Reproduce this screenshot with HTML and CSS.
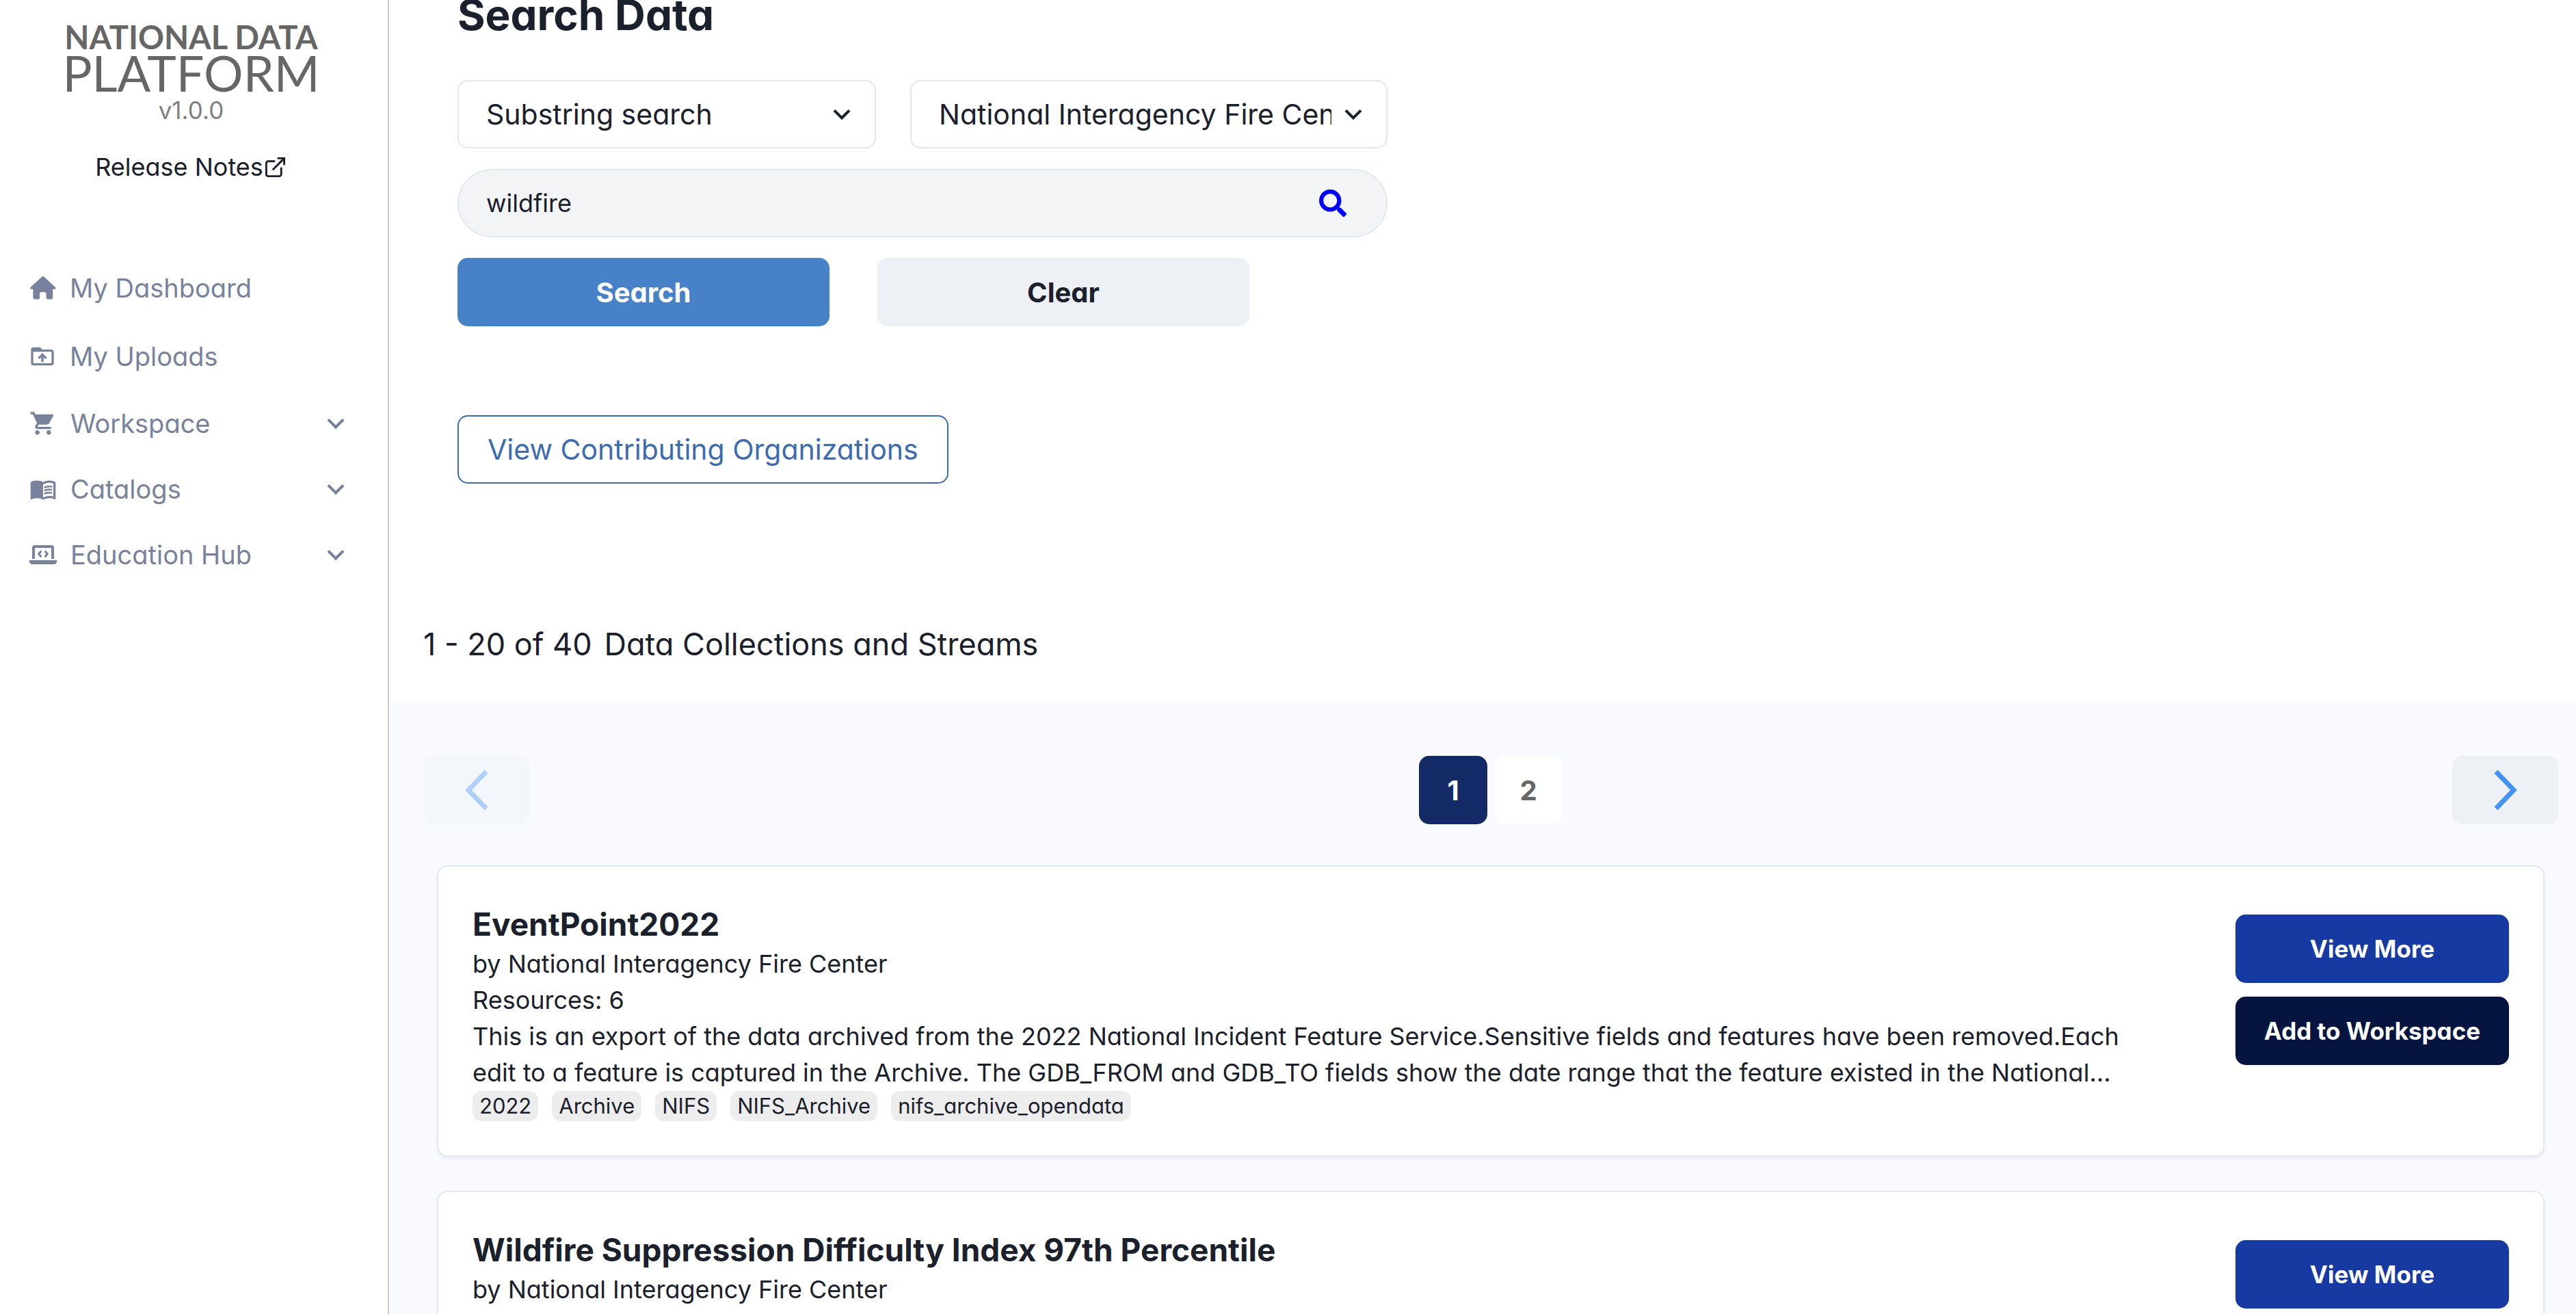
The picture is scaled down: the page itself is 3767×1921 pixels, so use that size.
FILE: index.html
```html
<!DOCTYPE html>
<html lang="en">
<head>
<meta charset="utf-8">
<title>Search Data - National Data Platform</title>
<link rel="stylesheet" href="styles.css">
</head>
<body>
<aside class="sidebar">
  <div class="brand">
    <span class="brand-top">NATIONAL DATA</span>
    <span class="brand-bottom">PLATFORM</span>
  </div>
  <p class="version">v1.0.0</p>
  <a class="release" href="#">Release Notes<svg class="icon-link" viewBox="0 0 24 24" fill="none" stroke="currentColor" stroke-width="2" stroke-linecap="round"><path d="M15 3h6v6"/><path d="M10 14L20.500 3.500"/><path d="M18 13v6a2 2 0 0 1-2 2H5a2 2 0 0 1-2-2V8a2 2 0 0 1 2-2h6"/></svg></a>
  <nav class="nav">
    <a class="nav-item nav-page" href="#"><svg class="icon" viewBox="0 0 20 20"><path d="M11.100 1.800a1 1 0 0 0-1.400 0L1.300 9.500a.800.800 0 0 0 .500 1.400H3.200v6.200a1.200 1.200 0 0 0 1.200 1.200h2.400A1.200 1.200 0 0 0 8 17.100v-2.900a1.200 1.200 0 0 1 1.200-1.200h2.400a1.200 1.200 0 0 1 1.200 1.200v2.900a1.200 1.200 0 0 0 1.200 1.200h2.400a1.200 1.200 0 0 0 1.200-1.200v-6.200H19a.800.800 0 0 0 .500-1.400z"/></svg><span>My Dashboard</span></a>
    <a class="nav-item nav-page" href="#"><svg class="icon" viewBox="0 0 24 24"><path d="M20 6h-8l-2-2H4c-1.100 0-1.990.900-1.990 2L2 18c0 1.100.900 2 2 2h16c1.100 0 2-.900 2-2V8c0-1.100-.900-2-2-2zm0 12H4V8h16v10zM8 13.010l1.410 1.410L11 12.840V17h2v-4.160l1.590 1.590L16 13.010 12.010 9 8 13.010z"/></svg><span>My Uploads</span></a>
    <button class="nav-item nav-group" type="button"><svg class="icon" viewBox="0 0 24 24"><path d="M7 18c-1.100 0-1.990.900-1.990 2S5.900 22 7 22s2-.900 2-2-.900-2-2-2zM1 2v2h2l3.600 7.590-1.350 2.450c-.160.280-.250.610-.250.960 0 1.100.900 2 2 2h12v-2H7.420c-.140 0-.250-.110-.250-.250l.030-.120.900-1.630h7.450c.750 0 1.410-.410 1.750-1.030l3.580-6.490c.080-.140.120-.310.120-.480 0-.550-.450-1-1-1H5.210l-.940-2H1zm16 16c-1.100 0-1.990.900-1.990 2s.890 2 1.990 2 2-.900 2-2-.900-2-2-2z"/></svg><span>Workspace</span><svg class="chevron" viewBox="0 0 24 24"><path d="M16.590 8.590L12 13.170 7.410 8.590 6 10l6 6 6-6z"/></svg></button>
    <button class="nav-item nav-group" type="button"><svg class="icon" viewBox="0 0 24 24"><path d="M21 5c-1.110-.350-2.330-.500-3.500-.500-1.950 0-4.050.400-5.500 1.500-1.450-1.100-3.550-1.500-5.500-1.500S2.450 4.900 1 6v14.650c0 .250.250.500.500.500.100 0 .150-.050.250-.050C3.100 20.450 5.050 20 6.500 20c1.950 0 4.050.400 5.500 1.500 1.350-.850 3.800-1.500 5.500-1.500 1.650 0 3.350.300 4.750 1.050.100.050.150.050.250.050.250 0 .500-.250.500-.500V6c-.600-.450-1.250-.750-2-1zm0 13.500c-1.100-.350-2.300-.500-3.500-.500-1.700 0-4.150.650-5.500 1.500V8c1.350-.850 3.800-1.500 5.500-1.500 1.200 0 2.400.150 3.500.500v11.500z"/><path d="M17.500 10.500c.880 0 1.730.090 2.500.260V9.240c-.790-.150-1.640-.240-2.500-.240-1.700 0-3.240.290-4.500.830v1.660c1.130-.640 2.700-.990 4.500-.990zM13 12.490v1.660c1.130-.640 2.700-.990 4.500-.990.880 0 1.730.090 2.500.260V11.900c-.790-.150-1.640-.240-2.500-.240-1.700 0-3.240.300-4.500.830zM17.500 14.330c-1.700 0-3.240.290-4.500.830v1.660c1.130-.640 2.700-.990 4.500-.990.880 0 1.730.090 2.500.260v-1.520c-.790-.160-1.640-.240-2.500-.240z"/></svg><span>Catalogs</span><svg class="chevron" viewBox="0 0 24 24"><path d="M16.590 8.590L12 13.170 7.410 8.590 6 10l6 6 6-6z"/></svg></button>
    <button class="nav-item nav-group" type="button"><svg class="icon" viewBox="0 0 24 24"><path d="M0 16.800h24v1a2.600 2.600 0 0 1-2.600 2.600H2.600A2.600 2.600 0 0 1 0 17.800zM2.400 15.600V6a2.400 2.400 0 0 1 2.400-2.400h14.400A2.400 2.400 0 0 1 21.600 6v9.600h-2.400V6H4.800v9.600z"/><path d="M10.400 8.700L8.200 11.300l2.200 2.600M13.600 8.700l2.200 2.600-2.200 2.600" fill="none" stroke="currentColor" stroke-width="1.800"/></svg><span>Education Hub</span><svg class="chevron" viewBox="0 0 24 24"><path d="M16.590 8.590L12 13.170 7.410 8.590 6 10l6 6 6-6z"/></svg></button>
  </nav>
</aside>
<main class="main">
  <section class="search">
    <h1>Search Data</h1>
    <form class="form">
      <div class="filters">
        <div class="select-wrap">
          <select aria-label="Search type"><option>Substring search</option></select>
          <svg class="chevron" viewBox="0 0 24 24"><path d="M16.590 8.590L12 13.170 7.410 8.590 6 10l6 6 6-6z"/></svg>
        </div>
        <div class="select-wrap">
          <select aria-label="Organization"><option>National Interagency Fire Center</option></select>
          <svg class="chevron" viewBox="0 0 24 24"><path d="M16.590 8.590L12 13.170 7.410 8.590 6 10l6 6 6-6z"/></svg>
        </div>
      </div>
      <div class="query">
        <input type="text" value="wildfire" aria-label="Search terms">
        <svg class="icon-search" viewBox="0 0 512 512"><path d="M505 442.700L405.300 343c-4.500-4.500-10.600-7-17-7H372c27.600-35.300 44-79.700 44-128C416 93.100 322.900 0 208 0S0 93.100 0 208s93.100 208 208 208c48.300 0 92.700-16.400 128-44v16.300c0 6.400 2.500 12.500 7 17l99.700 99.700c9.400 9.400 24.600 9.400 33.900 0l28.300-28.300c9.400-9.400 9.400-24.600.100-34zM208 336c-70.700 0-128-57.200-128-128 0-70.700 57.200-128 128-128 70.700 0 128 57.200 128 128 0 70.700-57.200 128-128 128z"/></svg>
      </div>
      <div class="actions">
        <button class="btn btn-search" type="button">Search</button>
        <button class="btn btn-clear" type="button">Clear</button>
      </div>
    </form>
    <button class="btn btn-outline" type="button">View Contributing Organizations</button>
    <p class="count"><span>1 - 20 of 40</span><span>Data Collections and Streams</span></p>
  </section>
  <section class="results">
    <div class="pager">
      <button class="pager-step" type="button" aria-label="Previous page" disabled><svg viewBox="0 0 34 60"><path d="M31 3L5 30l26 27"/></svg></button>
      <div class="pages">
        <button class="page page-current" type="button">1</button>
        <button class="page" type="button">2</button>
      </div>
      <button class="pager-step" type="button" aria-label="Next page"><svg viewBox="0 0 34 60"><path d="M3 3l26 27L3 57"/></svg></button>
    </div>
    <article class="card">
      <div class="card-body">
        <h2>EventPoint2022</h2>
        <p>by National Interagency Fire Center</p>
        <p>Resources: 6</p>
        <p class="description">This is an export of the data archived from the 2022 National Incident Feature Service.Sensitive fields and features have been removed.Each<br>edit to a feature is captured in the Archive. The GDB_FROM and GDB_TO fields show the date range that the feature existed in the National…</p>
        <ul class="tags"><li>2022</li><li>Archive</li><li>NIFS</li><li>NIFS_Archive</li><li>nifs_archive_opendata</li></ul>
      </div>
      <div class="card-actions">
        <button class="btn btn-view" type="button">View More</button>
        <button class="btn btn-add" type="button">Add to Workspace</button>
      </div>
    </article>
    <article class="card">
      <div class="card-body">
        <h2>Wildfire Suppression Difficulty Index 97th Percentile</h2>
        <p>by National Interagency Fire Center</p>
      </div>
      <div class="card-actions">
        <button class="btn btn-view" type="button">View More</button>
      </div>
    </article>
  </section>
</main>
</body>
</html>
```
FILE: styles.css
```css
* { box-sizing: border-box; margin: 0; padding: 0; }

html, body { height: 100%; }

body {
  display: flex;
  overflow: hidden;
  font-family: Inter, "Noto Sans", sans-serif;
  font-feature-settings: "cv11";
  font-size: 36px;
  line-height: 53px;
  color: #1a202c;
  background: #fff;
}

button, input, select { font: inherit; color: inherit; border: 0; background: none; font-feature-settings: inherit; }
a { color: inherit; text-decoration: none; }
svg { display: block; flex: none; fill: currentColor; }

.sidebar {
  flex: none;
  width: 569px;
  border-right: 2px solid #ccc;
  padding-top: 28px;
  display: flex;
  flex-direction: column;
  align-items: center;
}
.brand {
  display: flex;
  flex-direction: column;
  align-items: center;
  font-family: Lato, sans-serif;
  line-height: 52px;
  color: #666;
  padding-right: 8px;
}
.brand-top { font-size: 47px; font-weight: 700; }
.brand-bottom { font-size: 72px; }
.version { margin: 3px 8px 30px 0; color: #808080; font-size: 35px; }
.release { display: flex; align-items: center; margin: 0 8px 100px 0; }
.icon-link { width: 35px; height: 35px; fill: none; }

.nav { width: 100%; padding: 0 51px 0 42px; color: #78829d; font-size: 38px; }
.nav-item {
  display: flex;
  align-items: center;
  width: 100%;
  gap: 20px;
  text-align: left;
}
.nav-page { height: 100px; }
.nav-group { height: 96px; padding-left: 1px; }
.nav-item span { flex: 1; }
.icon { width: 40px; height: 40px; }
.chevron { width: 50px; height: 50px; }

.main { flex: 1; min-width: 0; display: flex; flex-direction: column; }
.search { padding: 0 100px; }
h1 { font-size: 62px; line-height: 44px; font-weight: 700; }
.form { max-width: 1360px; margin-top: 73px; display: grid; gap: 30px; font-size: 40px; }
.filters { display: grid; grid-template-columns: 612fr 698fr; gap: 50px; }
.select-wrap { display: grid; align-items: center; }
.select-wrap > * { grid-area: 1 / 1; }
.select-wrap .chevron { justify-self: end; margin-right: 25px; pointer-events: none; }
select {
  appearance: none;
  width: 100%;
  height: 100px;
  padding: 0 80px 0 40px;
  border: 2px solid #e2e8f0;
  border-radius: 15px;
  background: #fff;
  font-size: 41px;
}
.query {
  display: flex;
  align-items: center;
  height: 100px;
  padding: 0 58px 0 40px;
  border: 2px solid #e2e8f0;
  border-radius: 50px;
  background: #f3f4f6;
  font-size: 36px;
}
.query input { flex: 1; height: 96px; outline: 0; }
.icon-search { width: 40px; height: 40px; color: #00f; }
.actions { display: grid; grid-template-columns: 1fr 1fr; gap: 70px; max-width: 1158px; }
.btn { height: 100px; border-radius: 15px; font-weight: 700; }
.btn-search { background: #4781c7; color: #fff; }
.btn-clear { background: #edf0f5; }
.btn-outline {
  margin-top: 130px;
  padding: 0 42px;
  border: 2px solid #3c6caf;
  color: #3c6caf;
  font-size: 41px;
  font-weight: 400;
}
.count {
  display: flex;
  gap: 18px;
  margin: 202px -50px 0;
  font-size: 45px;
  line-height: 66px;
}

.results { flex: 1; margin-top: 50px; background: #f8faff; padding: 80px 26px 0 50px; }
.pager { display: flex; justify-content: space-between; align-items: center; }
.pager-step {
  display: grid;
  place-items: center;
  width: 155px;
  height: 100px;
  border-radius: 15px;
  background: #edf0f5;
}
.pager-step:disabled { background: #f3f6fb; }
.pager-step:disabled path { stroke: #aed0f7; }
.pager-step svg { width: 34px; height: 60px; }
.pager-step path { fill: none; stroke: #4394f0; stroke-width: 7; }
.pages { display: flex; gap: 10px; }
.page {
  width: 100px;
  height: 100px;
  border-radius: 15px;
  background: #fff;
  color: #666;
  font-size: 40px;
  font-weight: 700;
}
.page-current { background: #142a66; color: #fff; }

.card {
  display: flex;
  justify-content: space-between;
  gap: 40px;
  margin: 60px 20px 50px;
  padding: 0 50px 50px;
  border: 2px solid #e2e8f0;
  border-radius: 15px;
  background: #fff;
  box-shadow: 0 3px 5px rgba(0, 0, 0, 0.06);
}
.card + .card { margin-top: 0; }
.card-body { min-width: 0; padding-top: 57px; }
h2 { font-size: 46px; line-height: 54px; margin-bottom: 5px; font-weight: 700; }
.description { white-space: nowrap; }
.tags { display: flex; flex-wrap: wrap; gap: 20px; list-style: none; font-size: 31px; line-height: 44px; }
.tags li { padding: 0 10px; border-radius: 13px; background: #ededed; }
.card-actions { flex: none; width: 400px; padding-top: 70px; display: flex; flex-direction: column; gap: 20px; font-size: 35px; }
.btn-view { background: #1739a2; color: #fff; }
.btn-add { background: #061540; color: #fff; }
```
